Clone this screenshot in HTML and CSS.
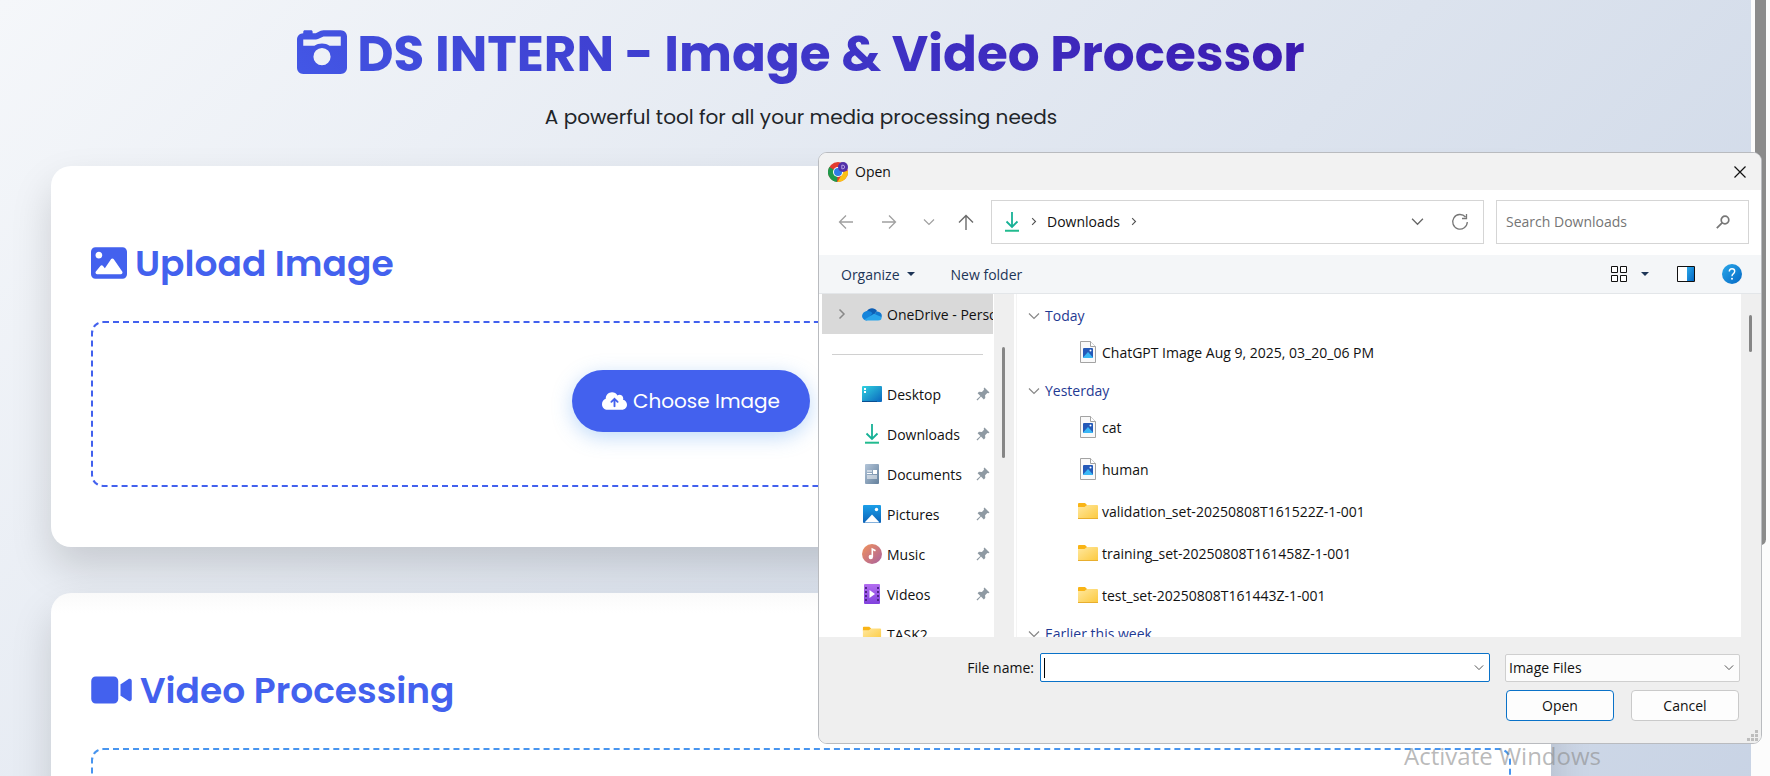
FILE: index.html
```html
<!DOCTYPE html>
<html lang="en">
<head>
<meta charset="utf-8">
<title>DS INTERN - Image &amp; Video Processor</title>
<link rel="stylesheet" href="styles.css">
</head>
<body>
<svg class="defs" aria-hidden="true">
  <defs>
    <linearGradient id="title" x1="0" y1="1" x2="1" y2="0"><stop offset="0" stop-color="#4357e6"/><stop offset="1" stop-color="#4250df"/></linearGradient>
    <linearGradient id="desk" x1="0" y1="0" x2="1" y2="1"><stop offset="0" stop-color="#31d3e0"/><stop offset="1" stop-color="#0a64bd"/></linearGradient>
    <linearGradient id="doc" x1="0" y1="0" x2="1" y2="1"><stop offset="0" stop-color="#b3c5d9"/><stop offset="1" stop-color="#64809c"/></linearGradient>
    <linearGradient id="pic" x1="0" y1="0" x2="0" y2="1"><stop offset="0" stop-color="#1c9fe8"/><stop offset="1" stop-color="#0b62b8"/></linearGradient>
    <linearGradient id="mus" x1="0" y1="0" x2="1" y2="1"><stop offset="0" stop-color="#f2935a"/><stop offset="1" stop-color="#a9609f"/></linearGradient>
    <linearGradient id="vid" x1="0" y1="0" x2="0" y2="1"><stop offset="0" stop-color="#b36df0"/><stop offset="1" stop-color="#8141dd"/></linearGradient>
    <linearGradient id="fold" x1="0" y1="0" x2="1" y2="1"><stop offset="0" stop-color="#ffe8a0"/><stop offset="1" stop-color="#fcc93d"/></linearGradient>
    <linearGradient id="blue" x1="0" y1="0" x2="1" y2="1"><stop offset="0" stop-color="#2ba9ea"/><stop offset="1" stop-color="#0467c4"/></linearGradient>
  </defs>
  <symbol id="i-folder" viewBox="0 0 22 18"><path d="M1 3V2q0-1 1-1h6l2 2v3H1z" fill="#f9b416"/><path d="M1 5h6.500l2.500-2h10q1 0 1 1v12q0 1-1 1H2q-1 0-1-1z" fill="url(#fold)"/><path d="M1 16.500h20" stroke="#e8ae2e"/></symbol>
  <symbol id="i-file" viewBox="0 0 18 24"><path d="M1.500 1.500h10l5 5v16h-15z" fill="#f9f9f9" stroke="#a3a3a3"/><path d="M11.500 1.500v5h5" fill="#fff" stroke="#a3a3a3"/><rect x="4" y="8" width="10" height="10" rx="1" fill="#2459b8"/><path d="M4 17.500L9 12l5 5.500v.5H4z" fill="#3ab7f5"/><circle cx="11.500" cy="10.500" r="1" fill="#fff"/></symbol>
  <symbol id="i-pin" viewBox="0 0 14 14"><path d="M8.500.5l5 5-1 .8-1.200-.2-2.200 2.200.2 2.800-1.500 1.400-2.800-2.900L1.500 13.500l-1-1 3.900-3.600L1.600 6.200 3 4.800l2.900.2L8 2.700 7.700 1.400z" fill="#8f9aa3"/></symbol>
  <symbol id="i-down" viewBox="0 0 16 20"><path d="M8 0v15M2.500 9.500L8 15l5.500-5.500" fill="none" stroke="#16b196" stroke-width="1.800"/><path d="M1 18.700h14" stroke="#22bb8f" stroke-width="2"/></symbol>
  <symbol id="i-chev" viewBox="0 0 12 8"><path d="M1 1.500l5 5 5-5" fill="none" stroke="currentColor" stroke-width="1.200"/></symbol>
  <symbol id="i-right" viewBox="0 0 8 12"><path d="M1.500 1.500L6 6l-4.500 4.500" fill="none" stroke="currentColor" stroke-width="1.500"/></symbol>
</svg>

<main class="page">
  <header class="hero">
    <h1 class="hero-title">
      <svg class="hero-icon" viewBox="0 0 512 512" fill="url(#title)"><path d="M220.600 121.200L271.100 96H448v96H333.200c-21.900-15.100-48.500-24-77.200-24s-55.200 8.900-77.200 24H64V128H192c9.900 0 19.700-2.300 28.600-6.800zM0 128V416c0 35.300 28.700 64 64 64H448c35.300 0 64-28.700 64-64V96c0-35.300-28.700-64-64-64H271.100c-9.900 0-19.700 2.300-28.600 6.800L192 64H160V48c0-8.800-7.200-16-16-16H80c-8.800 0-16 7.200-16 16V64C28.700 64 0 92.700 0 128zM168 304a88 88 0 1 1 176 0 88 88 0 1 1-176 0z" fill-rule="evenodd"/></svg>
      <span>DS INTERN - Image &amp; Video Processor</span>
    </h1>
    <p class="hero-sub">A powerful tool for all your media processing needs</p>
  </header>

  <section class="card">
    <h2 class="card-title">
      <svg class="card-icon" viewBox="0 0 512 512" fill="currentColor"><path fill-rule="evenodd" d="M0 96C0 60.700 28.700 32 64 32H448c35.300 0 64 28.700 64 64V416c0 35.300-28.700 64-64 64H64c-35.300 0-64-28.700-64-64V96zM323.800 202.500c-4.500-6.600-11.900-10.500-19.800-10.500s-15.400 3.900-19.800 10.500l-87 127.600L170.700 297c-4.600-5.700-11.500-9-18.700-9s-14.200 3.300-18.700 9l-64 80c-5.800 7.200-6.900 17.100-2.900 25.400s12.400 13.600 21.600 13.600H424c8.900 0 17.100-4.900 21.200-12.800s3.600-17.400-1.400-24.700l-120-176zM112 192c26.500 0 48-21.500 48-48s-21.500-48-48-48s-48 21.500-48 48s21.500 48 48 48z"/></svg>
      Upload Image
    </h2>
    <div class="drop">
      <button class="choose" type="button">
        <svg class="choose-icon" viewBox="0 0 640 512" fill="#fff"><path fill-rule="evenodd" d="M144 480C64.500 480 0 415.500 0 336c0-62.800 40.200-116.200 96.200-135.900c-.1-2.700-.2-5.400-.2-8.100c0-88.400 71.600-160 160-160c59.300 0 111 32.200 138.700 80.200C409.900 102 428.300 96 448 96c53 0 96 43 96 96c0 12.200-2.300 23.800-6.400 34.600C596 238.400 640 290.100 640 352c0 70.700-57.300 128-128 128H144zm79-217c-9.400 9.400-9.400 24.600 0 33.900s24.600 9.400 33.900 0l39-39V392c0 13.300 10.700 24 24 24s24-10.700 24-24V257.900l39 39c9.400 9.400 24.600 9.400 33.900 0s9.400-24.600 0-33.900l-80-80c-9.400-9.400-24.600-9.400-33.900 0l-80 80z"/></svg>
        Choose Image
      </button>
    </div>
  </section>

  <section class="card card-next">
    <h2 class="card-title">
      <svg class="card-icon wide" viewBox="0 0 576 512" fill="currentColor"><path d="M0 128C0 92.700 28.700 64 64 64H320c35.300 0 64 28.700 64 64V384c0 35.300-28.700 64-64 64H64c-35.300 0-64-28.700-64-64V128zM559.100 99.800c10.400 5.600 16.900 16.400 16.900 28.200V384c0 11.800-6.500 22.600-16.900 28.200s-23 5-32.900-1.600l-96-64L416 337.100V174.900l14.200-9.500 96-64c9.800-6.500 22.400-7.200 32.900-1.600z"/></svg>
      Video Processing
    </h2>
    <div class="drop drop-video"></div>
  </section>
</main>
<div class="page-scroll"><div class="page-thumb"></div></div>

<div class="dialog" role="dialog" aria-label="Open">
  <div class="titlebar">
    <svg class="chrome" viewBox="0 0 20 20"><circle cx="10" cy="10" r="10" fill="#e33b2e"/><path d="M1.300 5L10 10l-1 10A10 10 0 0 1 1.300 5z" fill="#1f9a4b"/><path d="M10 10L20 9a10 10 0 0 1-10.500 11L14 12z" fill="#fbc116"/><circle cx="10" cy="10" r="5" fill="#fff"/><circle cx="10" cy="10" r="4" fill="#2f7be6"/><circle cx="15" cy="5" r="5" fill="#5330a8"/><path d="M13.800 3.200h1.200q1.600 0 1.600 1.800t-1.600 1.800h-1.200z" fill="none" stroke="#cbb8ef" stroke-width=".8"/></svg>
    <span class="grow">Open</span>
    <button class="bare close" type="button" aria-label="Close"><svg width="12" height="12" viewBox="0 0 12 12"><path d="M.5.5l11 11M11.500.5l-11 11" stroke="#111" stroke-width="1.200"/></svg></button>
  </div>

  <div class="navbar">
    <div class="arrows">
      <button class="bare" type="button" aria-label="Back"><svg width="16" height="16" viewBox="0 0 16 16"><path d="M15 8H1.500M8 1.500L1.500 8 8 14.500" fill="none" stroke="#a0a0a0" stroke-width="1.300"/></svg></button>
      <button class="bare" type="button" aria-label="Forward"><svg width="16" height="16" viewBox="0 0 16 16"><path d="M1 8h13.500M8 1.500L14.500 8 8 14.500" fill="none" stroke="#a0a0a0" stroke-width="1.300"/></svg></button>
      <button class="bare light" type="button" aria-label="Recent locations"><svg width="12" height="8"><use href="#i-chev"/></svg></button>
      <button class="bare" type="button" aria-label="Up"><svg width="16" height="16" viewBox="0 0 16 16"><path d="M8 16V1.500M1 8.500l7-7 7 7" fill="none" stroke="#6a6a6a" stroke-width="1.400"/></svg></button>
    </div>
    <div class="address">
      <svg width="16" height="20"><use href="#i-down"/></svg>
      <svg class="crumb" width="6" height="9"><use href="#i-right"/></svg>
      <span>Downloads</span>
      <svg class="crumb grow-after" width="6" height="9"><use href="#i-right"/></svg>
      <button class="bare mid" type="button" aria-label="Previous locations"><svg width="13" height="9"><use href="#i-chev"/></svg></button>
      <button class="bare mid" type="button" aria-label="Refresh"><svg width="18" height="18" viewBox="0 0 18 18"><path d="M14.500 4A7.300 7.300 0 1 0 16.300 9M15.500 1v4.500H11" fill="none" stroke="#777" stroke-width="1.300"/></svg></button>
    </div>
    <div class="search">
      <input type="text" aria-label="Search Downloads" placeholder="Search Downloads">
      <svg width="14" height="14" viewBox="0 0 14 14"><circle cx="9" cy="5" r="3.800" fill="none" stroke="#777" stroke-width="1.700"/><path d="M6.300 7.700L.8 13.200" stroke="#777" stroke-width="1.800"/></svg>
    </div>
  </div>

  <div class="toolbar">
    <button class="bare text" type="button">Organize <svg width="8" height="4"><path d="M0 0h8L4 4z" fill="#1d3557"/></svg></button>
    <button class="bare text" type="button">New folder</button>
    <div class="views">
      <button class="bare" type="button" aria-label="View"><svg width="16" height="16" viewBox="0 0 16 16"><path d="M.5.500h6v6h-6zM9.500.5h6v6h-6zM.5 9.500h6v6h-6zM9.500 9.500h6v6h-6z" fill="#fff" stroke="#111"/></svg></button>
      <button class="bare" type="button" aria-label="More views"><svg width="8" height="4"><path d="M0 0h8L4 4z" fill="#1d3557"/></svg></button>
      <button class="bare pane" type="button" aria-label="Preview pane"><svg width="18" height="16" viewBox="0 0 18 16"><path d="M.5.5h17v15H.5z" fill="#fff" stroke="#111"/><path d="M10 1h7v14h-7z" fill="url(#blue)"/></svg></button>
      <button class="bare help" type="button" aria-label="Help"><svg width="20" height="20" viewBox="0 0 20 20"><circle cx="10" cy="10" r="10" fill="url(#blue)"/><path d="M7.300 7.600Q7.300 4.800 10 4.800t2.700 2.500Q12.700 8.800 11.200 9.800 10 10.600 10 12.200" fill="none" stroke="#fff" stroke-width="1.400"/><circle cx="10" cy="14.800" r="1" fill="#fff"/></svg></button>
    </div>
  </div>

  <div class="browser">
    <nav class="tree">
      <a class="place selected" href="#"><svg class="expand" width="8" height="12"><use href="#i-right"/></svg><svg class="place-icon" viewBox="0 0 20 20"><path d="M4 14a4 4 0 0 1 1-7 6 6 0 0 1 10 0l-4 5z" fill="#0d5fb5"/><path d="M5.500 7Q8 6.500 10.500 9L5 16.500A4.800 4.800 0 0 1 0 12Q.5 7.500 5.500 7z" fill="#1584db"/><path d="M14.500 7.500a4.500 4.500 0 0 1 5 6L12 11z" fill="#1178cf"/><path d="M2.500 15.500L12 9.800l7.500 3.200q.5 3.500-3.500 3.500H5q-1.500 0-2.500-1z" fill="#29a5ec"/></svg><span>OneDrive - Personal</span></a>
      <div class="divider"></div>
      <a class="place" href="#"><svg class="place-icon" viewBox="0 0 20 20"><rect y="2" width="20" height="16" rx="1" fill="url(#desk)"/><path d="M2 4h2v2H2zM2 7h2v2H2z" fill="#fff"/><path d="M0 17.500h15" stroke="#0a4f92"/></svg><span>Desktop</span><svg class="pin"><use href="#i-pin"/></svg></a>
      <a class="place" href="#"><svg class="place-icon"><use href="#i-down"/></svg><span>Downloads</span><svg class="pin"><use href="#i-pin"/></svg></a>
      <a class="place" href="#"><svg class="place-icon" viewBox="0 0 20 20"><rect x="3" width="14" height="20" rx="1" fill="url(#doc)"/><path d="M5 7h5M5 9.500h5M5 12h10M5 14h10" stroke="#fff" stroke-width="1.200"/><path d="M11 6h4v4h-4z" fill="#fff"/></svg><span>Documents</span><svg class="pin"><use href="#i-pin"/></svg></a>
      <a class="place" href="#"><svg class="place-icon" viewBox="0 0 20 20"><rect x="1" y="1" width="18" height="18" rx="1" fill="url(#pic)"/><path d="M2.500 18.500L10 10.500l7.500 8z" fill="#fff"/><circle cx="14.500" cy="5.500" r="1.700" fill="#fff"/></svg><span>Pictures</span><svg class="pin"><use href="#i-pin"/></svg></a>
      <a class="place" href="#"><svg class="place-icon" viewBox="0 0 20 20"><circle cx="10" cy="10" r="10" fill="url(#mus)"/><circle cx="8.800" cy="13" r="2.200" fill="#fff"/><path d="M10.300 13V5l3.200 1.800" fill="none" stroke="#fff" stroke-width="1.600"/></svg><span>Music</span><svg class="pin"><use href="#i-pin"/></svg></a>
      <a class="place" href="#"><svg class="place-icon" viewBox="0 0 20 20"><rect x="2" width="16" height="20" rx="1" fill="url(#vid)"/><path d="M4 3v15M16 3v15" stroke="#46207e" stroke-width="1.800" stroke-dasharray="2 2"/><path d="M7.500 6l5.500 4-5.500 4z" fill="#fff"/></svg><span>Videos</span><svg class="pin"><use href="#i-pin"/></svg></a>
      <a class="place" href="#"><svg class="place-icon"><use href="#i-folder"/></svg><span>TASK2</span></a>
    </nav>
    <div class="track tree-track"><div class="thumb"></div></div>
    <div class="files">
      <h3 class="group"><svg width="12" height="8"><use href="#i-chev"/></svg>Today</h3>
      <a class="file" href="#"><svg class="file-icon"><use href="#i-file"/></svg>ChatGPT Image Aug 9, 2025, 03_20_06 PM</a>
      <h3 class="group"><svg width="12" height="8"><use href="#i-chev"/></svg>Yesterday</h3>
      <a class="file" href="#"><svg class="file-icon"><use href="#i-file"/></svg>cat</a>
      <a class="file" href="#"><svg class="file-icon"><use href="#i-file"/></svg>human</a>
      <a class="file" href="#"><svg class="file-icon"><use href="#i-folder"/></svg>validation_set-20250808T161522Z-1-001</a>
      <a class="file" href="#"><svg class="file-icon"><use href="#i-folder"/></svg>training_set-20250808T161458Z-1-001</a>
      <a class="file" href="#"><svg class="file-icon"><use href="#i-folder"/></svg>test_set-20250808T161443Z-1-001</a>
      <h3 class="group"><svg width="12" height="8"><use href="#i-chev"/></svg>Earlier this week</h3>
    </div>
    <div class="track files-track"><div class="thumb short"></div></div>
  </div>

  <div class="footer">
    <div class="fields">
      <label for="fname">File name:</label>
      <div class="name-box"><i class="caret"></i><input id="fname" type="text"><svg width="10" height="7"><use href="#i-chev"/></svg></div>
      <div class="type-box"><select aria-label="File type"><option>Image Files</option></select><svg width="10" height="7"><use href="#i-chev"/></svg></div>
    </div>
    <div class="actions">
      <button class="action primary" type="button">Open</button>
      <button class="action" type="button">Cancel</button>
    </div>
    <svg class="grip" viewBox="0 0 12 12" fill="#bdbdbd"><path d="M8 0h3v3H8zM4 4h3v3H4zM8 4h3v3H8zM0 8h3v3H0zM4 8h3v3H4zM8 8h3v3H8z"/></svg>
  </div>
</div>
<div class="watermark">Activate Windows</div>
</body>
</html>
```

FILE: styles.css
```css
* { box-sizing: border-box; }
body {
  margin: 0;
  height: 100vh;
  overflow: hidden;
  display: flex;
  position: relative;
  font-family: "Poppins", "Inter", sans-serif;
  color: #212529;
}
button, input, select { font: inherit; color: inherit; }
svg { display: block; flex: none; }
a { color: inherit; text-decoration: none; }
.defs { position: absolute; width: 0; height: 0; }

.page {
  flex: 1;
  min-width: 0;
  overflow: hidden;
  padding: 16px 200px 0 51px;
  background: linear-gradient(135deg, #f5f7fa 0%, #c3cfe2 100%) 0 0 / 100% 1105px;
}
.page-scroll { width: 19px; padding: 0 4px; background: #fcfcfc; }
.page-thumb { height: 545px; border-radius: 0 0 6px 6px; background: #8b8b8b; }

.hero { height: 150px; text-align: center; }
.hero-title {
  display: flex;
  justify-content: center;
  align-items: center;
  gap: 10px;
  margin: 0;
  font-size: 50px;
  line-height: 76px;
  font-weight: 700;
  white-space: nowrap;
  background: linear-gradient(45deg, #4361ee, #3a0ca3);
  -webkit-background-clip: text;
  background-clip: text;
  color: transparent;
}
.hero-icon { width: 50px; height: 50px; margin-bottom: 4px; }
.hero-sub { margin: 10px 0 0; font-size: 20px; line-height: 30px; }

.card {
  height: 381px;
  margin-bottom: 46px;
  padding: 76px 40px 60px;
  border-radius: 20px;
  background: #fff;
  box-shadow: 0 20px 40px rgba(0, 0, 0, 0.15);
}
.card-next { background: linear-gradient(#fafafa, #fff 20px); }
.card-title {
  display: flex;
  align-items: center;
  gap: 8px;
  margin: 0 0 35px;
  font-size: 36px;
  line-height: 44px;
  font-weight: 600;
  color: #4361ee;
}
.card-icon { width: 36px; height: 36px; margin-bottom: 3px; }
.card-icon.wide { width: 41px; }
.drop {
  display: flex;
  justify-content: center;
  height: 166px;
  padding: 47px 220px 0 0;
  border: 2px dashed #4361ee;
  border-radius: 12px;
}
.drop-video { border-color: #4895ef; }
.choose {
  display: flex;
  align-items: center;
  gap: 6px;
  height: 62px;
  padding: 0 30px;
  border: 0;
  border-radius: 31px;
  background: #4361ee;
  color: #fff;
  font-size: 20px;
  box-shadow: 0 5px 20px rgba(72, 149, 239, 0.35);
}
.choose-icon { width: 25px; height: 20px; }

.dialog {
  position: absolute;
  top: 152px;
  right: 8px;
  width: 944px;
  height: 592px;
  display: flex;
  flex-direction: column;
  overflow: hidden;
  border: 1px solid #b9bbbf;
  border-radius: 9px;
  background: #fff;
  font-family: "Segoe UI", "Open Sans", sans-serif;
  font-size: 14px;
  color: #111;
}
.bare { display: flex; align-items: center; padding: 0; border: 0; background: none; }
.grow { flex: 1; }
.titlebar {
  display: flex;
  align-items: center;
  gap: 7px;
  height: 37px;
  padding: 0 15px 0 9px;
  background: #f2f2f2;
}
.chrome { width: 20px; height: 20px; }

.navbar { display: flex; align-items: center; height: 65px; padding: 0 12px 2px 19px; }
.arrows { display: flex; align-items: center; gap: 27px; width: 153px; }
.arrows .light { margin: 0 -4px 0 -1px; color: #a0a0a0; }
.address {
  flex: 1;
  display: flex;
  align-items: center;
  height: 44px;
  margin-right: 12px;
  padding: 0 14px 0 12px;
  border: 1px solid #d5d5d5;
}
.crumb { margin: 0 10px 0 11px; color: #555; }
.grow-after { margin-right: auto; }
.mid { color: #666; }
.mid + .mid { margin-left: 27px; }
.search {
  display: flex;
  align-items: center;
  width: 253px;
  height: 44px;
  padding: 0 18px 0 9px;
  border: 1px solid #d5d5d5;
}
.search input { flex: 1; min-width: 0; padding: 0; border: 0; outline: 0; background: none; }
.search input::placeholder { color: #757575; opacity: 1; }

.toolbar {
  display: flex;
  align-items: center;
  gap: 36px;
  height: 39px;
  padding: 0 19px 0 22px;
  border-bottom: 1px solid #e3e6e9;
  background: #f4f6f8;
  color: #1d3557;
}
.text { gap: 7px; }
.views { display: flex; align-items: center; margin-left: auto; gap: 14px; }
.pane { margin-left: 14px; }
.help { margin-left: 13px; }

.browser { flex: 1; min-height: 0; display: flex; overflow: hidden; }
.tree { flex: none; width: 175px; padding: 0 1px 0 3px; overflow: hidden; }
.place {
  display: flex;
  align-items: center;
  gap: 5px;
  height: 40px;
  padding: 0 3px 0 40px;
  white-space: nowrap;
  overflow: hidden;
}
.place span { flex: 1; }
.place.selected { padding: 0 0 0 16px; background: #d9d9d9; }
.place.selected span { flex: none; }
.expand { margin-right: 11px; color: #888; }
.place-icon { width: 20px; height: 20px; }
.pin { width: 14px; height: 14px; }
.divider { height: 1px; margin: 20px 10px 19px; background: #d0d0d0; }
.track { flex: none; width: 20px; background: #efefef; }
.thumb { width: 3px; height: 111px; margin: 53px 0 0 8px; border-radius: 2px; background: #868686; }
.thumb.short { height: 37px; margin-top: 21px; }
.files { flex: 1; min-width: 0; margin-left: 2px; padding-top: 4px; border-left: 1px solid #f4f4f4; overflow: hidden; }
.group {
  display: flex;
  align-items: center;
  gap: 5px;
  height: 33px;
  margin: 0;
  padding: 2px 0 0 11px;
  font-size: 14px;
  font-weight: 400;
  color: #1f3a93;
}
.group svg { color: #888; }
.file { display: flex; align-items: center; gap: 3px; height: 42px; padding-left: 60px; }
.file-icon { width: 22px; height: 24px; }

.footer { position: relative; height: 106px; padding: 16px 21px 0; background: #efefef; }
.fields, .actions { display: flex; align-items: center; justify-content: flex-end; }
.fields label { margin-right: 6px; }
.name-box, .type-box {
  display: flex;
  align-items: center;
  height: 29px;
  border: 1px solid #0a72c8;
  border-radius: 2px;
  background: #fff;
  color: #555;
}
.name-box { width: 450px; margin-right: 15px; padding: 0 5px 0 3px; }
.name-box input { flex: 1; min-width: 0; border: 0; outline: 0; background: none; color: #111; }
.caret { width: 1px; height: 20px; background: #000; }
.type-box { width: 235px; height: 28px; padding: 0 5px 0 3px; border-color: #cfcfcf; background: #fcfcfc; }
.type-box select { flex: 1; padding: 0; border: 0; appearance: none; background: none; color: #111; }
.actions { gap: 17px; margin-top: 8px; padding-right: 1px; }
.action {
  width: 108px;
  height: 31px;
  padding: 0;
  border: 1px solid #cacaca;
  border-radius: 4px;
  background: #fdfdfd;
}
.action.primary { border-color: #0a72c8; }
.grip { position: absolute; right: 2px; bottom: 1px; width: 12px; height: 12px; }

.watermark {
  position: absolute;
  right: 169px;
  bottom: 4px;
  font-family: "Segoe UI", "Open Sans", sans-serif;
  font-size: 24px;
  line-height: 32px;
  color: rgba(140, 140, 140, 0.6);
}
```
